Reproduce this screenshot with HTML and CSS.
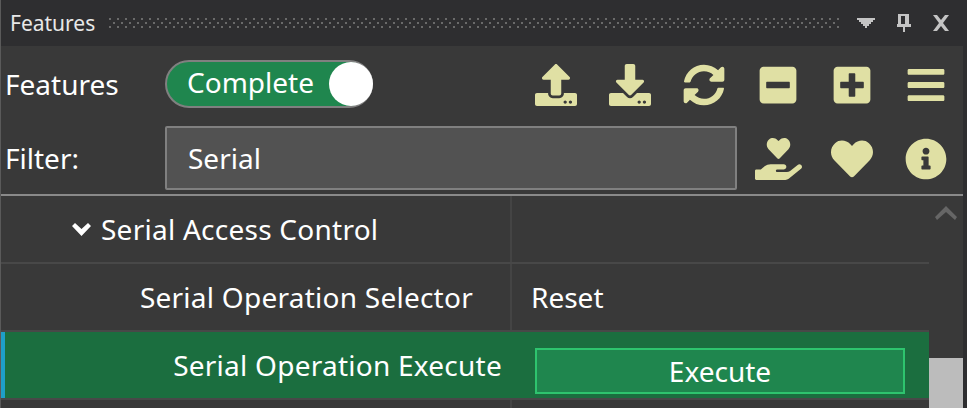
FILE: index.html
```html
<!DOCTYPE html>
<html lang="en">
    <head>
        <meta charset="UTF-8">
        <title>Features</title>
        <link rel="stylesheet" href="styles.css">
    </head>
    <body>
        <div class="panel">
            <header class="title-bar">
                <span class="title-text">Features</span>
                <span class="grip"></span>
                <svg class="title-icon title-menu" viewBox="0 0 18 10"><path d="M0 0h18v2h-2v2h-2v2h-2v2h-2v2H8V8H6V6H4V4H2V2H0z"/></svg>
                <svg class="title-icon title-pin" viewBox="0 0 14 18"><path d="M1 0h11v10h2v3H8v5H6v-5H0v-3h1zm3 2v8h4V2z"/></svg>
                <svg class="title-icon title-close" viewBox="0 0 16 16"><path d="M0 0h4l4 5 4-5h4l-6 8 6 8h-4l-4-5-4 5H0l6-8z"/></svg>
            </header>
            <section class="toolbar">
                <div class="tool-row">
                    <label class="tool-label">Features</label>
                    <div class="toggle">
                        <span class="toggle-text">Complete</span>
                        <span class="toggle-knob"></span>
                    </div>
                    <div class="icons">
                        <span class="icon-cell"><svg class="icon" viewBox="0 0 512 512"><path d="M296 384h-80c-13.300 0-24-10.700-24-24V192h-87.700c-17.800 0-26.700-21.500-14.100-34.100L242.300 5.700c7.500-7.500 19.800-7.500 27.300 0l152.200 152.200c12.600 12.600 3.700 34.100-14.100 34.100H320v168c0 13.300-10.700 24-24 24zm216-8v112c0 13.300-10.700 24-24 24H24c-13.300 0-24-10.700-24-24V376c0-13.300 10.700-24 24-24h136v8c0 30.900 25.100 56 56 56h80c30.900 0 56-25.100 56-56v-8h136c13.300 0 24 10.700 24 24zm-124 88c0-11-9-20-20-20s-20 9-20 20 9 20 20 20 20-9 20-20zm64 0c0-11-9-20-20-20s-20 9-20 20 9 20 20 20 20-9 20-20z"/></svg></span>
                        <span class="icon-cell"><svg class="icon" viewBox="0 0 512 512"><path d="M216 0h80c13.300 0 24 10.700 24 24v168h87.700c17.800 0 26.700 21.500 14.100 34.100L269.700 378.300c-7.500 7.500-19.800 7.500-27.300 0L90.100 226.100c-12.600-12.600-3.700-34.100 14.100-34.100H192V24c0-13.300 10.700-24 24-24zm296 376v112c0 13.300-10.700 24-24 24H24c-13.300 0-24-10.700-24-24V376c0-13.300 10.700-24 24-24h146.700l49 49c20.100 20.100 52.500 20.100 72.600 0l49-49H488c13.300 0 24 10.700 24 24zm-124 88c0-11-9-20-20-20s-20 9-20 20 9 20 20 20 20-9 20-20zm64 0c0-11-9-20-20-20s-20 9-20 20 9 20 20 20 20-9 20-20z"/></svg></span>
                        <span class="icon-cell"><svg class="icon" viewBox="0 0 512 512"><path d="M370.720 133.280C339.458 104.008 298.888 87.962 255.848 88c-77.458.068-144.328 53.178-162.791 126.850-1.344 5.363-6.122 9.150-11.651 9.150H24.103c-7.498 0-13.194-6.807-11.807-14.176C33.933 94.924 134.813 8 256 8c66.448 0 126.791 26.136 171.315 68.685L463.030 40.970C478.149 25.851 504 36.559 504 57.941V192c0 13.255-10.745 24-24 24H345.941c-21.382 0-32.090-25.851-16.971-40.971l41.750-41.749zM32 296h134.059c21.382 0 32.090 25.851 16.971 40.971l-41.750 41.750c31.262 29.273 71.835 45.319 114.876 45.280 77.418-.070 144.315-53.144 162.787-126.849 1.344-5.363 6.122-9.150 11.651-9.150h57.304c7.498 0 13.194 6.807 11.807 14.176C478.067 417.076 377.187 504 256 504c-66.448 0-126.791-26.136-171.315-68.685L48.970 471.030C33.851 486.149 8 475.441 8 454.059V320c0-13.255 10.745-24 24-24z"/></svg></span>
                        <span class="icon-cell"><svg class="icon" viewBox="0 0 448 512"><path d="M400 32H48C21.500 32 0 53.500 0 80v352c0 26.500 21.500 48 48 48h352c26.500 0 48-21.500 48-48V80c0-26.500-21.500-48-48-48zM92 296c-6.600 0-12-5.400-12-12v-56c0-6.600 5.400-12 12-12h264c6.600 0 12 5.400 12 12v56c0 6.600-5.400 12-12 12H92z"/></svg></span>
                        <span class="icon-cell"><svg class="icon" viewBox="0 0 448 512"><path d="M400 32H48C21.500 32 0 53.500 0 80v352c0 26.500 21.500 48 48 48h352c26.500 0 48-21.500 48-48V80c0-26.500-21.500-48-48-48zm-32 252c0 6.600-5.400 12-12 12h-92v92c0 6.600-5.400 12-12 12h-56c-6.600 0-12-5.400-12-12v-92H92c-6.600 0-12-5.400-12-12v-56c0-6.600 5.400-12 12-12h92v-92c0-6.600 5.400-12 12-12h56c6.600 0 12 5.400 12 12v92h92c6.600 0 12 5.400 12 12v56z"/></svg></span>
                        <span class="icon-cell"><svg class="icon" viewBox="0 0 448 512"><path d="M16 132h416c8.837 0 16-7.163 16-16V76c0-8.837-7.163-16-16-16H16C7.163 60 0 67.163 0 76v40c0 8.837 7.163 16 16 16zm0 160h416c8.837 0 16-7.163 16-16v-40c0-8.837-7.163-16-16-16H16c-8.837 0-16 7.163-16 16v40c0 8.837 7.163 16 16 16zm0 160h416c8.837 0 16-7.163 16-16v-40c0-8.837-7.163-16-16-16H16c-8.837 0-16 7.163-16 16v40c0 8.837 7.163 16 16 16z"/></svg></span>
                    </div>
                </div>
                <div class="tool-row filter-row">
                    <label class="tool-label">Filter:</label>
                    <div class="filter-box">Serial</div>
                    <div class="icons">
                        <span class="icon-cell"><svg class="icon icon-hand" viewBox="0 0 576 512"><path d="M275.300 250.500c7 7.400 18.400 7.400 25.500 0l108.900-114.200c31.600-33.200 29.800-88.200-5.600-118.800-30.800-26.700-76.700-21.900-104.900 7.700L288 36.900l-11.100-11.600C248.700-4.400 202.800-9.200 172 17.500c-35.300 30.600-37.200 85.600-5.600 118.800l108.900 114.200zm290 77.600c-11.800-10.700-30.200-10-42.600 0L430.300 402c-11.300 9.100-25.400 14-40 14H272c-8.800 0-16-7.200-16-16s7.200-16 16-16h78.300c15.900 0 30.700-10.900 33.300-26.600 3.300-20-12.100-37.400-31.600-37.400H192c-27 0-53.100 9.300-74.100 26.300L71.400 384H16c-8.800 0-16 7.200-16 16v96c0 8.800 7.200 16 16 16h356.800c14.500 0 28.600-4.900 40-14l151.200-121c15.200-12.200 16.400-34.900 1.300-48.900z"/></svg></span>
                        <span class="icon-cell"><svg class="icon" viewBox="0 0 512 512"><path d="M462.300 62.600C407.500 15.900 326 24.300 275.700 76.200L256 96.500l-19.700-20.300C186.100 24.300 104.500 15.900 49.700 62.600c-62.800 53.600-66.100 149.800-9.900 207.900l193.500 199.800c12.500 12.900 32.800 12.900 45.300 0l193.500-199.800c56.300-58.100 53-154.300-9.800-207.900z"/></svg></span>
                        <span class="icon-cell"><svg class="icon" viewBox="0 0 512 512"><path d="M256 8C119.043 8 8 119.083 8 256c0 136.997 111.043 248 248 248s248-111.003 248-248C504 119.083 392.957 8 256 8zm0 110c23.196 0 42 18.804 42 42s-18.804 42-42 42-42-18.804-42-42 18.804-42 42-42zm56 254c0 6.627-5.373 12-12 12h-88c-6.627 0-12-5.373-12-12v-24c0-6.627 5.373-12 12-12h12v-64h-12c-6.627 0-12-5.373-12-12v-24c0-6.627 5.373-12 12-12h64c6.627 0 12 5.373 12 12v100h12c6.627 0 12 5.373 12 12v24z"/></svg></span>
                    </div>
                </div>
            </section>
            <section class="tree">
                <div class="rows">
                    <div class="row">
                        <div class="name name-group">
                            <svg class="chevron" viewBox="0 0 19 13"><path d="M0 3l3-3 6.500 6 6.500-6 3 3-9.500 10z"/></svg>
                            Serial Access Control
                        </div>
                        <div class="value"></div>
                    </div>
                    <div class="row">
                        <div class="name">Serial Operation Selector</div>
                        <div class="value">Reset</div>
                    </div>
                    <div class="row row-selected">
                        <div class="name">Serial Operation Execute</div>
                        <div class="value"><button class="execute-btn">Execute</button></div>
                    </div>
                    <div class="row row-empty">
                        <div class="name"></div>
                        <div class="value"></div>
                    </div>
                </div>
                <div class="scrollbar">
                    <svg class="scroll-up" viewBox="0 0 22 14"><path d="M11 0l11 11-2 3-9-8-9 8-2-3z"/></svg>
                    <div class="scroll-thumb"></div>
                </div>
            </section>
        </div>
    </body>
</html>
```

FILE: styles.css
```css
html, body{
    margin: 0;
    padding: 0;
    height: 408px;
    overflow: hidden;
    background-color: #2E2E30;
}
body{
    font-family: "Noto Sans", sans-serif;
    font-size: 28px;
    color: #FFF;
}
svg{
    display: block;
    fill: currentColor;
}
.panel{
    height: 408px;
    background-color: #2E2E30;
    border-left: 1px solid #5A5A5A;
    box-sizing: border-box;
}
.title-bar{
    display: flex;
    align-items: center;
    height: 46px;
    padding-left: 9px;
    color: #C4C4C4;
}
.title-text{
    width: 99px;
    font-size: 21px;
    color: #E8E8E8;
    margin-top: -1px;
}
.grip{
    width: 730px;
    height: 10px;
    margin-top: -1px;
    background-image:
        conic-gradient(from 0deg at 2px 2px, transparent 75%, #6A6A6A 0),
        conic-gradient(from 0deg at 2px 2px, transparent 75%, #6A6A6A 0);
    background-size: 8px 8px;
    background-position: 0 0, 4px 4px;
}
.title-icon{
    flex: none;
}
.title-menu{
    width: 18px;
    height: 10px;
    margin-left: 18px;
}
.title-pin{
    width: 14px;
    height: 18px;
    margin-left: 22px;
    margin-top: -1px;
}
.title-close{
    width: 16px;
    height: 16px;
    margin-left: 22px;
}
.toolbar{
    height: 150px;
    margin-right: 4px;
    background-color: #393939;
    border-bottom: 2px solid #8A8A8A;
    box-sizing: border-box;
}
.tool-row{
    display: flex;
    align-items: center;
    height: 76px;
    padding-left: 4px;
}
.filter-row{
    height: 72px;
}
.tool-label{
    width: 160px;
}
.toggle{
    display: flex;
    align-items: center;
    justify-content: space-between;
    width: 208px;
    height: 48px;
    box-sizing: border-box;
    padding-left: 20px;
    background-color: #1F864E;
    border: 2px solid #808080;
    border-radius: 24px;
}
.toggle-text{
    margin-top: -4px;
}
.toggle-knob{
    width: 44px;
    height: 44px;
    margin-right: -2px;
    border-radius: 50%;
    background-color: #FFF;
}
.filter-box{
    width: 572px;
    height: 64px;
    box-sizing: border-box;
    padding-left: 21px;
    line-height: 60px;
    background-color: #525252;
    border: 2px solid #808080;
    border-radius: 2px;
}
.icons{
    display: flex;
    margin-left: auto;
    color: #E0E0A4;
}
.icon-cell{
    display: flex;
    justify-content: center;
    width: 74px;
    margin-top: 1px;
}
.icon{
    flex: none;
    width: 42px;
    height: 42px;
}
.icon-hand{
    width: 47px;
}
.tree{
    display: flex;
    height: 212px;
    margin-right: 4px;
    background-color: #393939;
}
.rows{
    width: 928px;
}
.row{
    display: flex;
    height: 68px;
    box-sizing: border-box;
    border-bottom: 2px solid #484848;
}
.name{
    display: flex;
    align-items: center;
    justify-content: flex-end;
    width: 511px;
    box-sizing: border-box;
    padding-right: 37px;
    letter-spacing: .25px;
    border-right: 2px solid #444;
}
.name-group{
    justify-content: flex-start;
    padding-left: 71px;
    padding-right: 0;
    gap: 10px;
}
.chevron{
    flex: none;
    width: 19px;
    height: 13px;
}
.value{
    display: flex;
    align-items: center;
    flex: 1;
    padding-left: 19px;
}
.row-selected{
    background-color: #1B6E3F;
    box-shadow: inset 4px 0 0 #1E9FC8;
}
.row-selected .name{
    padding-right: 10px;
    border-right: none;
}
.execute-btn{
    width: 370px;
    height: 46px;
    margin-left: 4px;
    margin-top: 12px;
    padding: 0;
    font: inherit;
    color: #FFF;
    background-color: #1F864E;
    border: 2px solid #2EC46E;
}
.row-empty{
    height: 8px;
    border-bottom: none;
}
.scrollbar{
    flex: 1;
    display: flex;
    flex-direction: column;
    color: #666;
}
.scroll-up{
    flex: none;
    width: 22px;
    height: 14px;
    margin: 10px 0 0 6px;
}
.scroll-thumb{
    flex: none;
    height: 50px;
    margin-top: 138px;
    background-color: #BCBCBC;
}
```
